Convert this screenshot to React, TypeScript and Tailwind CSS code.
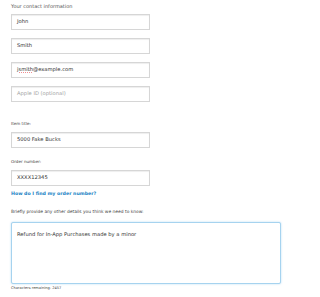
import { FC } from "react";

const font = "font-['DejaVu_Sans',_'Liberation_Sans',_sans-serif]";

interface FieldProps {
  value?: string;
  placeholder?: string;
  spell?: boolean;
  className?: string;
}

const Field: FC<FieldProps> = ({ value, placeholder, spell, className = "" }) => {
  return (
    <div
      className={`flex h-[16px] w-[139px] items-center border border-[#d6d6d6] bg-white pl-[5px] text-[5.2px] shadow-[inset_0_1px_1px_rgba(0,0,0,0.07)] ${className}`}
    >
      {value ? (
        spell ? (
          <span className="text-[#333]">
            <span className="underline decoration-[#ee8f92] decoration-dotted decoration-[1px] underline-offset-[1px]">
              jsmith
            </span>
            {value.replace("jsmith", "")}
          </span>
        ) : (
          <span className="text-[#333]">{value}</span>
        )
      ) : (
        <span className="text-[#a3a3a3]">{placeholder}</span>
      )}
    </div>
  );
};

export default function App() {
  return (
    <div className={`${font} min-h-[297px] w-[300px] bg-white pl-[11px] pt-[3px] text-[#444]`}>
      {/* Contact info */}
      <div className="h-[6px] text-[5px] leading-[6px] text-[#555]">Your contact information</div>
      <div className="mt-[5px] flex flex-col gap-[8px]">
        <Field value="John" />
        <Field value="Smith" />
        <Field value="jsmith@example.com" spell />
        <Field placeholder="Apple ID (optional)" />
      </div>

      {/* Item */}
      <div className="mt-[19px] h-[6px] text-[4.1px] leading-[6px]">Item title:</div>
      <Field value="5000 Fake Bucks" className="mt-[5px]" />

      <div className="mt-[11px] h-[6px] text-[4.1px] leading-[6px]">Order number:</div>
      <Field value="XXXX12345" className="mt-[5px]" />

      <div className="mt-[5px] h-[6px] text-[4.7px] font-bold leading-[6px] text-[#1a82c4]">
        How do I find my order number?
      </div>

      {/* Details */}
      <div className="mt-[12px] h-[6px] text-[4.4px] leading-[6px]">
        Briefly provide any other details you think we need to know:
      </div>
      <div className="mt-[7px] h-[62px] w-[270px] rounded-[2px] border border-[#a6d3ef] bg-white pl-[5px] pt-[8px] text-[5.2px] leading-[6px] text-[#333] shadow-[0_0_2px_rgba(120,190,235,0.6)]">
        Refund for In-App Purchases made by a minor
      </div>
      <div className="mt-[2px] h-[5px] text-[3.6px] leading-[5px]">Characters remaining: 2457</div>
    </div>
  );
}
